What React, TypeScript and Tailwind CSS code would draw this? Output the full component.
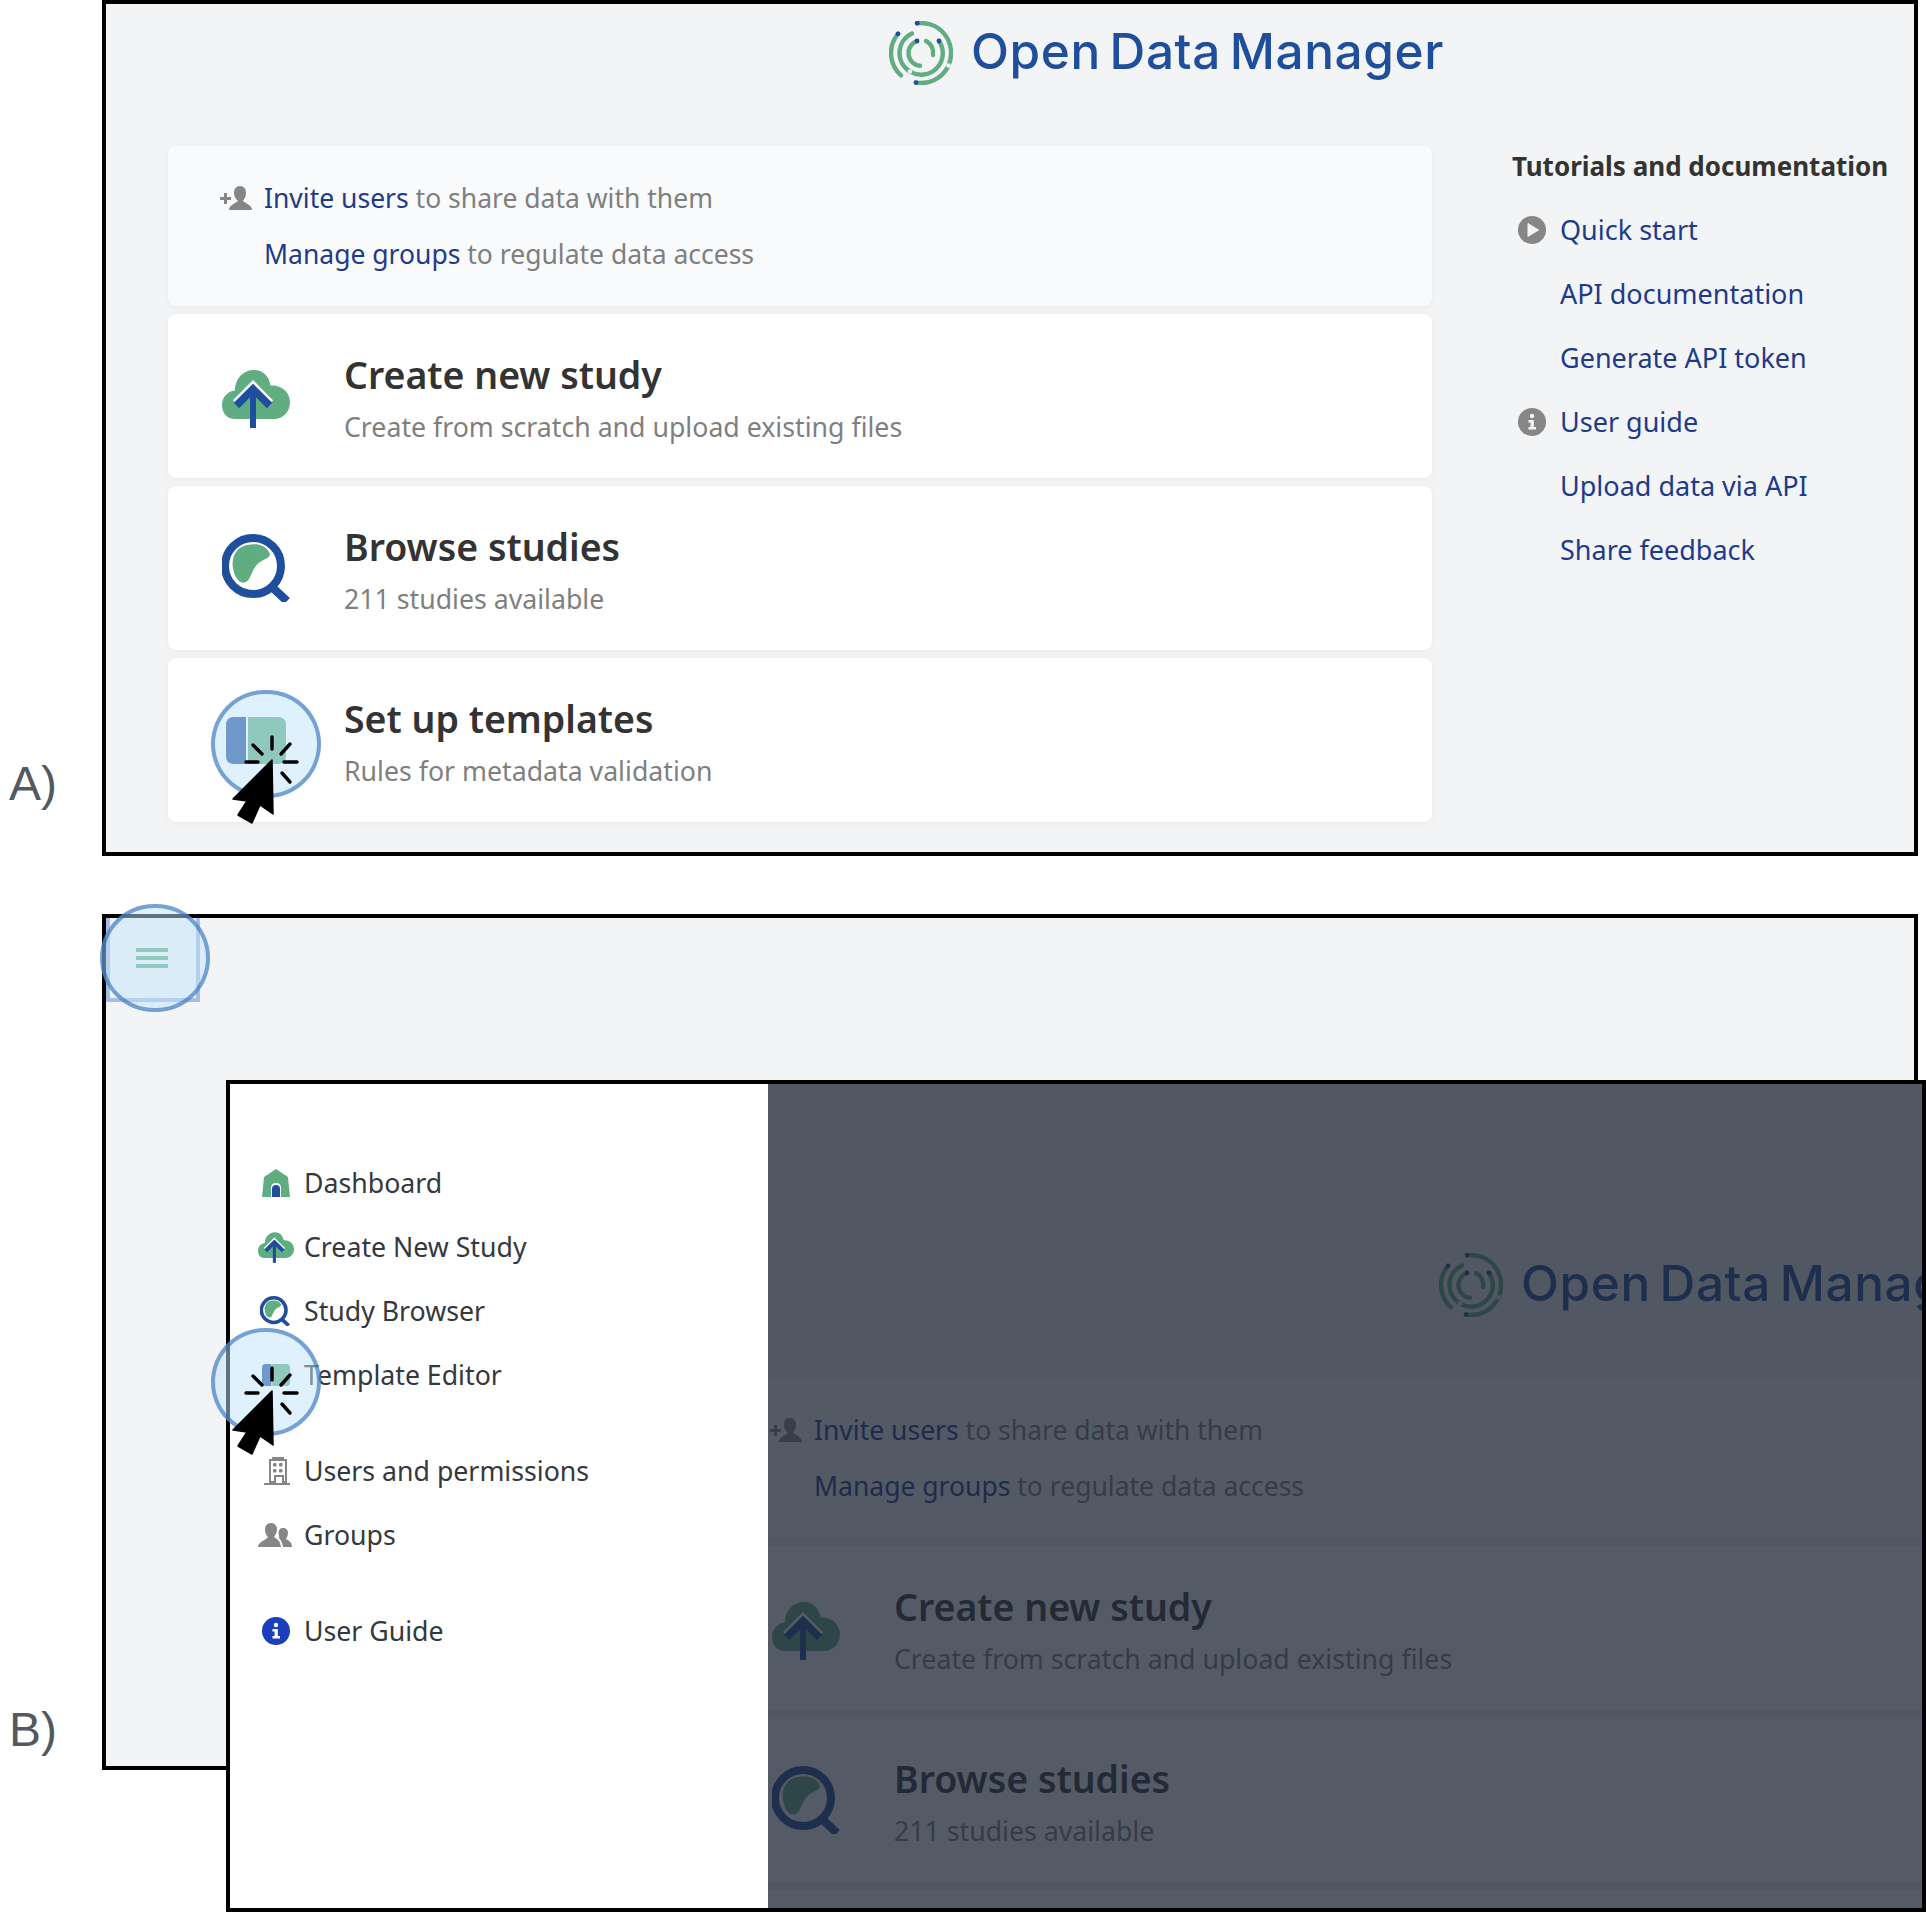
import React from "react";

const BLUE = "#1f4e9c";
const GREEN = "#5fad80";

function Logo() {
  const arcs = [
    "M -3.8 -29.8 A 30 30 0 0 1 28 11",
    "M -5 29.6 A 30 30 0 0 0 27 13.5",
    "M -23 -19.2 A 30 30 0 0 0 -20 22.4",
    "M -9 -19.5 A 21.5 21.5 0 0 0 -11 18.5",
    "M 18 -12 A 21.5 21.5 0 0 1 -11 18.5",
    "M -4 -12 A 12.8 12.8 0 0 0 -1 12.8",
    "M 5 -12 A 13 13 0 0 1 12 2",
  ];
  const dots = [[-3.8, -29.8], [-23, -19.2], [-5, 29.6], [-4, -12], [18, -12]];
  return (
    <svg width="64" height="64" viewBox="-32 -32 64 64" className="shrink-0">
      {arcs.map((d) => (
        <path key={d} d={d} fill="none" stroke={GREEN} strokeWidth="4.4" strokeLinecap="round" />
      ))}
      {dots.map(([x, y]) => (
        <circle key={`${x}${y}`} cx={x} cy={y} r="2.4" fill={BLUE} />
      ))}
      <circle cx="27.5" cy="12.5" r="2.2" fill="#f3f4f6" />
      <circle cx="-11" cy="18.5" r="2.2" fill="#f3f4f6" />
    </svg>
  );
}

function CloudIcon({ width = 68, height = 58 }: { width?: number; height?: number }) {
  return (
    <svg width={width} height={height} viewBox="0 0 68 58" className="shrink-0">
      <path
        d="M13 49 C5 49 0 43 0 35 C0 27 6 21 13 20.5 C13 8 22 0 32 0 C41 0 47 6 48.5 15.5 C60 14.5 68 23 68 32 C68 42 61 49 52 49 Z"
        fill={GREEN}
      />
      <path d="M12 33 L31 14 L50 33" fill="none" stroke="#ffffff" strokeWidth="3" transform="translate(0 -1.8)" />
      <path d="M14.5 35.5 L31 19 L47.5 35.5" fill="none" stroke={BLUE} strokeWidth="7.5" />
      <rect x="28" y="19" width="6" height="39" fill={BLUE} />
    </svg>
  );
}

function SearchIcon({ size = 68 }: { size?: number }) {
  return (
    <svg width={size} height={size} viewBox="0 0 68 68" className="shrink-0">
      <path
        d="M11 34 C9 24 14 13 25 11 C34 9 44 10 48 20 C48 24 42 25 38 28 C33 31 31 37 28 43 C25 50 20 50 16 46 C13 43 12 39 11 34 Z"
        fill={GREEN}
      />
      <circle cx="31" cy="32" r="28" fill="none" stroke={BLUE} strokeWidth="8" />
      <path d="M51 54 L65 67" stroke={BLUE} strokeWidth="8.5" />
    </svg>
  );
}

function TemplateIcon({ width = 60, height = 47 }: { width?: number; height?: number }) {
  return (
    <svg width={width} height={height} viewBox="0 0 60 47" className="shrink-0">
      <path d="M8 0 H20 V47 H8 Q0 47 0 39 V8 Q0 0 8 0 Z" fill={BLUE} />
      <path d="M22 0 H52 Q60 0 60 8 V39 Q60 47 52 47 H22 Z" fill={GREEN} />
    </svg>
  );
}

function UserPlusIcon() {
  return (
    <svg width="32" height="24" viewBox="0 0 32 24" className="shrink-0" fill="currentColor">
      <path d="M0 11 H4 V7 H7 V11 H11 V14 H7 V18 H4 V14 H0 Z" />
      <path d="M20 0 C24 0 26 3 26 7 C26 11 24 13 23 15 C25 17 32 19 32 24 H9 C9 19 16 17 18 15 C16 13 14 11 14 7 C14 3 16 0 20 0 Z" />
    </svg>
  );
}

function PlayIcon() {
  return (
    <svg width="28" height="28" viewBox="0 0 28 28" className="shrink-0">
      <circle cx="14" cy="14" r="14" fill="#868686" />
      <path d="M10 7.5 L20.5 14 L10 20.5 Z" fill="#f3f4f6" stroke="#f3f4f6" strokeLinejoin="round" />
    </svg>
  );
}

function InfoIcon({ color = "#868686", dot = "#f3f4f6" }: { color?: string; dot?: string }) {
  return (
    <svg width="28" height="28" viewBox="0 0 28 28" className="shrink-0">
      <circle cx="14" cy="14" r="14" fill={color} />
      <circle cx="14" cy="8" r="2.2" fill={dot} />
      <path d="M10.5 12 H15.8 V19 H18 V21.5 H10.5 V19 H12.6 V14.5 H10.5 Z" fill={dot} />
    </svg>
  );
}

function HomeIcon() {
  return (
    <svg width="28" height="28" viewBox="0 0 28 28" className="shrink-0">
      <path d="M14 0 L26 8 L28 28 H0 L2 8 Z" fill={GREEN} />
      <path d="M9 28 V19 Q9 14 14 14 Q19 14 19 19 V28 Z" fill="#ffffff" />
      <path d="M10 28 V20 Q10 16 14 16 Q18 16 18 20 V28 Z" fill={BLUE} />
    </svg>
  );
}

function BuildingIcon() {
  return (
    <svg width="26" height="28" viewBox="0 0 26 28" className="shrink-0" fill="#868686">
      <rect x="8" y="0" width="12" height="2" />
      <path d="M5 2 H23 V26 H18 V20 H12 V26 H5 Z M7 4 V24 H10 V18 H20 V24 H21 V4 Z" fillRule="evenodd" />
      <rect x="9" y="6" width="3.5" height="3.5" rx="1" />
      <rect x="15" y="6" width="3.5" height="3.5" rx="1" />
      <rect x="9" y="12" width="3.5" height="3.5" rx="1" />
      <rect x="15" y="12" width="3.5" height="3.5" rx="1" />
      <rect x="0" y="26" width="26" height="2" />
    </svg>
  );
}

function GroupsIcon() {
  return (
    <svg width="34" height="24" viewBox="0 0 34 24" className="shrink-0" fill="#868686">
      <path d="M13 0 C17 0 19 3 19 6.5 C19 10 17 12 16 14 C18 15.5 21 17 22 20 L23 24 H0 C0 19 8 17 10 14 C8 12 7 10 7 6.5 C7 3 9 0 13 0 Z" />
      <path d="M25 5 C28 5 30 7 30 10 C30 13 28.5 14 28 16 C30 17 34 19 34 24 H25 C24.5 20 23 17 21 15 C21.5 14 21 12 20.5 10 C20.5 7 22 5 25 5 Z" />
    </svg>
  );
}

function Highlight({ className, tipX, tipY, cursor = true }: { className: string; tipX?: number; tipY?: number; cursor?: boolean }) {
  return (
    <>
      <div className={`absolute w-[110px] h-[108px] rounded-full border-[4px] border-[#2f6cb8]/60 bg-[#bfe3f9]/50 ${className}`} />
      {cursor && (
        <svg
          width="90"
          height="100"
          viewBox="-45 -30 90 100"
          className="absolute"
          style={{ left: (tipX ?? 0) - 45, top: (tipY ?? 0) - 30 }}
        >
          <path d="M0 -2 L1 52 L-12 43 L-20 61 L-34 53 L-25 39 L-39 37 Z" fill="#000" stroke="#000" strokeWidth="1.5" strokeLinejoin="round" />
          <g stroke="#000" strokeWidth="3.4" strokeLinecap="round">
            <path d="M0 -25 V-13" />
            <path d="M-19 -17 L-10 -8" />
            <path d="M18 -18 L9 -8" />
            <path d="M-26 0 H-14" />
            <path d="M12 0 H25" />
            <path d="M10 11 L18 20" />
          </g>
        </svg>
      )}
    </>
  );
}

function Card({ icon, title, sub }: { icon: React.ReactNode; title: string; sub: string }) {
  return (
    <div className="h-[164px] bg-white rounded-lg shadow-[0_1px_6px_rgba(0,0,0,0.05)] flex items-center pl-[54px]">
      <div className="w-[122px] flex justify-start shrink-0">{icon}</div>
      <div className="flex flex-col pt-[4px]">
        <div className="text-[37.5px] leading-[48px] font-semibold text-[#333333]">{title}</div>
        <div className="text-[26.7px] leading-[36px] mt-[10px] text-[#7f7f7f]">{sub}</div>
      </div>
    </div>
  );
}

function DashboardContent() {
  const links: [string, React.ReactNode][] = [
    ["Quick start", <PlayIcon key="p" />],
    ["API documentation", null],
    ["Generate API token", null],
    ["User guide", <InfoIcon key="i" />],
    ["Upload data via API", null],
    ["Share feedback", null],
  ];
  return (
    <div className="w-[1808px] font-['Noto_Sans',sans-serif]">
      <div className="h-[142px] pl-[783px] pt-[17px] flex items-start">
        <Logo />
        <span className="ml-[18px] font-['Inter',sans-serif] text-[49.5px] leading-[60px] tracking-[0.012em] [word-spacing:-5px] font-medium text-[#1f4e9c] whitespace-nowrap">
          Open Data Manager
        </span>
      </div>
      <div className="flex items-start pl-[62px]">
        <div className="w-[1264px] flex flex-col gap-2 shrink-0">
          <div className="h-[160px] bg-[#f9fafb] rounded-lg shadow-[0_1px_6px_rgba(0,0,0,0.05)] pl-[52px] pt-[24px] text-[26.5px] leading-[56px] text-[#7f7f7f]">
            <div className="flex items-center">
              <span className="w-[44px] text-[#868686] shrink-0">
                <UserPlusIcon />
              </span>
              <span>
                <span className="text-[#1e3a8a]">Invite users</span> to share data with them
              </span>
            </div>
            <div className="pl-[44px]">
              <span className="text-[#1e3a8a]">Manage groups</span> to regulate data access
            </div>
          </div>
          <Card
            icon={
              <span className="mt-[6px] block">
                <CloudIcon />
              </span>
            }
            title="Create new study"
            sub="Create from scratch and upload existing files"
          />
          <Card icon={<SearchIcon />} title="Browse studies" sub="211 studies available" />
          <Card
            icon={
              <span className="ml-[4px] block">
                <TemplateIcon />
              </span>
            }
            title="Set up templates"
            sub="Rules for metadata validation"
          />
        </div>
        <div className="ml-[80px]">
          <div className="text-[26px] leading-[40px] font-bold text-[#333333] whitespace-nowrap">Tutorials and documentation</div>
          <div className="mt-[12px] flex flex-col">
            {links.map(([label, icon]) => (
              <div key={label} className="h-[64px] flex items-center pl-[6px]">
                <span className="w-[42px] shrink-0 flex">{icon}</span>
                <span className="text-[27px] text-[#1e3a8a] whitespace-nowrap">{label}</span>
              </div>
            ))}
          </div>
        </div>
      </div>
    </div>
  );
}

function NavItem({ icon, label, left }: { icon: React.ReactNode; label: string; left: number }) {
  return (
    <div className="h-[64px] flex items-center relative">
      <span className="absolute flex" style={{ left }}>
        {icon}
      </span>
      <span className="ml-[74px] text-[26.7px] text-[#35383d] whitespace-nowrap">{label}</span>
    </div>
  );
}

export default function App() {
  return (
    <div className="relative w-[1926px] h-[1912px] overflow-hidden bg-white">
      <div className="flex">
        <div className="w-[102px] shrink-0 pl-[9px] pt-[756px] font-['Liberation_Sans',sans-serif] text-[48px] leading-[56px] text-[#54585f]">A)</div>
        <div className="w-[1816px] h-[856px] shrink-0 border-4 border-black bg-[#f3f4f6] overflow-hidden">
          <DashboardContent />
        </div>
      </div>
      <div className="flex mt-[58px]">
        <div className="w-[102px] shrink-0 pl-[9px] pt-[788px] font-['Liberation_Sans',sans-serif] text-[48px] leading-[56px] text-[#54585f]">B)</div>
        <div className="w-[1816px] h-[856px] shrink-0 border-4 border-black bg-[#f3f4f6]">
          <div className="w-[94px] h-[84px] bg-[#f3f4f6] border-4 border-t-0 border-[#a9bce6] flex items-center justify-center pb-[1px] pr-[2px]">
            <div className="w-[32px] flex flex-col gap-1">
              <div className="h-1 bg-[#5fad80]" />
              <div className="h-1 bg-[#5fad80]" />
              <div className="h-1 bg-[#5fad80]" />
            </div>
          </div>
        </div>
      </div>

      <div className="absolute left-[226px] top-[1080px] w-[1700px] h-[832px] border-4 border-black flex bg-white">
        <div className="w-[538px] shrink-0 bg-white pt-[67px] font-['Noto_Sans',sans-serif]">
          <div>
            <NavItem left={32} icon={<HomeIcon />} label="Dashboard" />
            <NavItem left={28} icon={<CloudIcon width={36} height={31} />} label="Create New Study" />
            <NavItem left={30} icon={<SearchIcon size={30} />} label="Study Browser" />
            <NavItem left={32} icon={<TemplateIcon width={28} height={24} />} label="Template Editor" />
          </div>
          <div className="mt-[32px]">
            <NavItem left={34} icon={<BuildingIcon />} label="Users and permissions" />
            <NavItem left={28} icon={<GroupsIcon />} label="Groups" />
          </div>
          <div className="mt-[32px]">
            <NavItem left={32} icon={<InfoIcon color="#1c40bd" dot="#ffffff" />} label="User Guide" />
          </div>
        </div>
        <div className="relative flex-1 overflow-hidden bg-[#f3f4f6]">
          <div className="ml-[-112px] mt-[152px]">
            <DashboardContent />
          </div>
          <div className="absolute inset-0 bg-[#1e2636]/[0.76]" />
        </div>
      </div>

      <Highlight className="left-[211px] top-[690px]" tipX={272} tipY={762} />
      <Highlight className="left-[100px] top-[904px]" cursor={false} />
      <Highlight className="left-[211px] top-[1328px]" tipX={272} tipY={1393} />
    </div>
  );
}
